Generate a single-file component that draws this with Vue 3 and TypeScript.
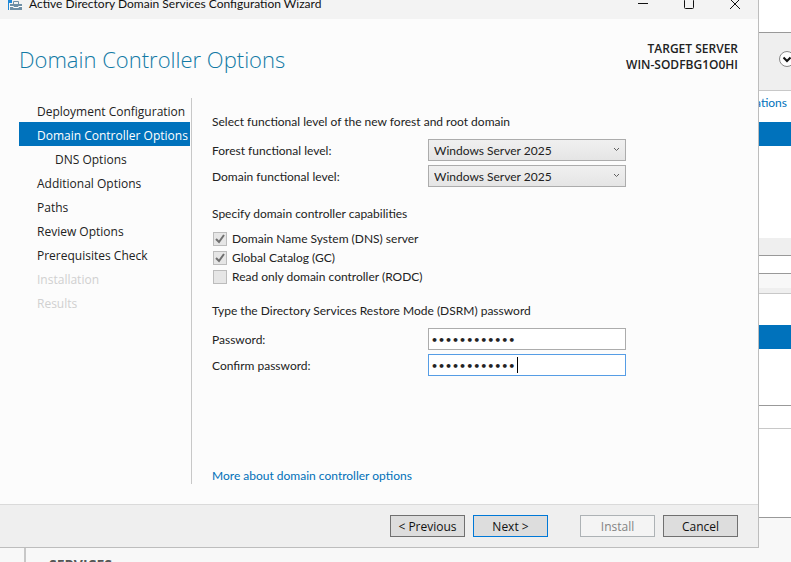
<script setup lang="ts">
import { onMounted, ref } from 'vue'

interface Step {
  label: string
  state?: 'current' | 'disabled'
  nested?: boolean
}

const steps: Step[] = [
  { label: 'Deployment Configuration' },
  { label: 'Domain Controller Options', state: 'current' },
  { label: 'DNS Options', nested: true },
  { label: 'Additional Options' },
  { label: 'Paths' },
  { label: 'Review Options' },
  { label: 'Prerequisites Check' },
  { label: 'Installation', state: 'disabled' },
  { label: 'Results', state: 'disabled' },
]

const levels = ['Windows Server 2025', 'Windows Server 2022', 'Windows Server 2016']
const forestLevel = ref(levels[0])
const domainLevel = ref(levels[0])

const capabilities = ref([
  { id: 'dns', label: 'Domain Name System (DNS) server', on: true },
  { id: 'gc', label: 'Global Catalog (GC)', on: true },
  { id: 'rodc', label: 'Read only domain controller (RODC)', on: false },
])

const password = ref('P@ssw0rd2025')
const confirmation = ref('P@ssw0rd2025')
const confirmInput = ref<HTMLInputElement | null>(null)

onMounted(() => {
  confirmInput.value?.focus()
})
</script>

<template>
  <div class="desktop">
    <section class="wizard">
      <header class="titlebar">
        <svg class="app-icon" width="16" height="16" viewBox="0 0 16 16" aria-hidden="true">
          <path d="M1 0h7v15H1z" fill="#1e88d8" />
          <path d="M2 8h3V5h8v3h3v8H2z" fill="#f3f3f3" />
          <path d="M3 9h12v6H3z" fill="#6f8fa6" />
          <path d="M6.500 9V6.500h5V9" fill="none" stroke="#6f8fa6" />
          <path d="M3 11.500h3.500v1h5v-1H15" fill="none" stroke="#fff" />
        </svg>
        <span class="caption">Active Directory Domain Services Configuration Wizard</span>
        <div class="window-buttons">
          <button type="button" aria-label="Minimize">
            <svg width="12" height="12" viewBox="0 0 12 12"><path d="M1 5.500h10" /></svg>
          </button>
          <button type="button" aria-label="Maximize">
            <svg width="12" height="12" viewBox="0 0 12 12"><rect x="1.500" y="1.500" width="9" height="9" rx="1" /></svg>
          </button>
          <button type="button" aria-label="Close">
            <svg width="12" height="12" viewBox="0 0 12 12"><path d="M1 1l10 10M11 1L1 11" /></svg>
          </button>
        </div>
      </header>

      <div class="heading">
        <h1>Domain Controller Options</h1>
        <p class="target">TARGET SERVER<br />WIN-SODFBG1O0HI</p>
      </div>

      <div class="body">
        <nav class="steps">
          <a
            v-for="step in steps"
            :key="step.label"
            href="#"
            :class="[step.state, { nested: step.nested }]"
            >{{ step.label }}</a
          >
        </nav>

        <form id="options" class="options" @submit.prevent>
          <p>Select functional level of the new forest and root domain</p>
          <div class="fields">
            <label for="forest">Forest functional level:</label>
            <div class="field">
              <select id="forest" v-model="forestLevel">
                <option v-for="level in levels" :key="level">{{ level }}</option>
              </select>
              <svg width="7" height="5" viewBox="0 0 7 5"><path d="M1 1l2.500 2.500L6 1" /></svg>
            </div>
            <label for="domain">Domain functional level:</label>
            <div class="field">
              <select id="domain" v-model="domainLevel">
                <option v-for="level in levels" :key="level">{{ level }}</option>
              </select>
              <svg width="7" height="5" viewBox="0 0 7 5"><path d="M1 1l2.500 2.500L6 1" /></svg>
            </div>
          </div>

          <p>Specify domain controller capabilities</p>
          <div class="checks">
            <label v-for="item in capabilities" :key="item.id">
              <span class="box">
                <input v-model="item.on" type="checkbox" disabled />
                <svg v-if="item.on" width="12" height="12" viewBox="0 0 12 12">
                  <path d="M2 6l3 3 5-7" />
                </svg>
              </span>
              {{ item.label }}
            </label>
          </div>

          <p>Type the Directory Services Restore Mode (DSRM) password</p>
          <div class="fields">
            <label for="password">Password:</label>
            <div class="field">
              <input id="password" v-model="password" type="password" />
            </div>
            <label for="confirm">Confirm password:</label>
            <div class="field">
              <input id="confirm" ref="confirmInput" v-model="confirmation" type="password" />
              <span class="caret"></span>
            </div>
          </div>

          <a class="more" href="#">More about domain controller options</a>
        </form>
      </div>

      <footer class="actions">
        <button type="button">&lt; Previous</button>
        <button type="submit" form="options" class="primary">Next &gt;</button>
        <button type="button" class="install" disabled>Install</button>
        <button type="button">Cancel</button>
      </footer>
    </section>

    <aside class="behind">
      <div class="band top"></div>
      <div class="band toolbar">
        <svg width="18" height="18" viewBox="0 0 18 18" aria-hidden="true">
          <circle cx="9" cy="9" r="7.500" fill="#fdfdfd" stroke="#888" />
          <path d="M5.500 7.500L9 11l3.500-3.500" fill="none" stroke="#111" stroke-width="2" />
        </svg>
      </div>
      <div class="band links">ations</div>
      <div class="band selected"></div>
      <div class="band list"></div>
      <div class="band scroll"></div>
      <div class="band gap"></div>
      <div class="band header"></div>
      <div class="band subheader"></div>
      <div class="band filter"></div>
      <div class="band selected"></div>
      <div class="band rows"></div>
      <div class="band divider"></div>
      <div class="band rest"></div>
    </aside>

    <div class="below"><div class="tile">SERVICES</div></div>
  </div>
</template>

<style>
body {
  background: #f8f8f8;
}
</style>

<style scoped>
* {
  box-sizing: border-box;
}

.desktop {
  display: grid;
  grid-template-columns: minmax(0, 1fr) 32px;
  grid-template-rows: auto minmax(0, 1fr);
  height: 100vh;
  overflow: hidden;
  background: #f8f8f8;
  color: #222;
  font: 12px/16px Lato, 'Open Sans', sans-serif;
}

p,
h1 {
  margin: 0;
}

a {
  color: #0070b8;
  text-decoration: none;
}

button,
input,
select {
  font: inherit;
  color: inherit;
}

.wizard {
  display: flex;
  flex-direction: column;
  border: solid #bdbdbd;
  border-width: 0 1px 1px 0;
  background: #fcfcfc;
}

.titlebar {
  display: flex;
  align-items: flex-start;
  height: 19px;
  padding-left: 7px;
  background: #f3f3f3;
  color: #111;
  overflow: hidden;
}

.app-icon {
  margin: -5px 6px 0 0;
}

.caption {
  margin-top: -4px;
}

.window-buttons {
  display: flex;
  margin: -4px 0 0 auto;
}

.window-buttons button {
  display: grid;
  place-items: center;
  width: 46px;
  height: 16px;
  padding: 0;
  border: 0;
  background: none;
}

.window-buttons svg {
  fill: none;
  stroke: #111;
}

.heading {
  display: flex;
  justify-content: space-between;
  align-items: flex-start;
  padding: 22px 20px 0 19px;
}

h1 {
  color: #127aa5;
  font-family: 'Open Sans', sans-serif;
  font-size: 22px;
  font-weight: 300;
  line-height: 36px;
}

.target {
  font-family: 'Open Sans', sans-serif;
  font-weight: 600;
  text-align: right;
}

.body {
  display: flex;
  gap: 20px;
  padding: 21px 20px 20px 19px;
}

.steps {
  display: flex;
  flex-direction: column;
  flex: none;
  width: 173px;
  padding-right: 1px;
  border-right: 1px solid #c8c8c8;
  font-family: 'Open Sans', sans-serif;
  line-height: 20px;
  white-space: nowrap;
}

.steps a {
  padding: 4px 0 0 18px;
  color: #222;
}

.steps .nested {
  padding-left: 36px;
}

.steps .current {
  background: #0072bc;
  color: #fff;
}

.steps .disabled {
  color: #d0d0d0;
}

.options {
  flex: 1;
  min-width: 0;
  padding-top: 16px;
}

.fields {
  display: grid;
  grid-template-columns: 216px 198px;
  align-items: center;
  gap: 4px 0;
  margin: 9px 0 19px;
}

.fields label {
  padding-top: 2px;
}

.field {
  position: relative;
}

.field input,
.field select {
  display: block;
  width: 100%;
  height: 22px;
  margin: 0;
  border: 1px solid #acacac;
  border-radius: 0;
  outline: 0;
}

.field input {
  padding: 3px 2px 0;
  background: #fff;
  font: bold 11px 'DejaVu Sans', sans-serif;
  caret-color: transparent;
}

.field input:focus {
  border-color: #569de5;
}

.caret {
  display: none;
  position: absolute;
  top: 3px;
  left: 89px;
  width: 1px;
  height: 16px;
  background: #000;
}

input:focus + .caret {
  display: block;
}

.field select {
  padding: 2px 5px 0;
  appearance: none;
  background: linear-gradient(#f0f0f0, #e5e5e5);
}

.field svg {
  position: absolute;
  top: 8px;
  right: 6px;
  fill: none;
  stroke: #606060;
  pointer-events: none;
}

.checks {
  display: flex;
  flex-direction: column;
  gap: 3px;
  margin: 9px 0 18px;
}

.checks label {
  display: flex;
  align-items: center;
  gap: 5px;
}

.box {
  display: grid;
  width: 15px;
  justify-items: end;
  align-items: center;
}

.box > * {
  grid-area: 1 / 1;
}

.box input {
  width: 14px;
  height: 14px;
  margin: 0;
  appearance: none;
  border: 1px solid #bcbcbc;
  background: #e6e6e6;
}

.box svg {
  margin-right: 1px;
  fill: none;
  stroke: #707070;
  stroke-width: 2;
}

.more {
  display: block;
  margin-top: 92px;
}

.actions {
  display: flex;
  justify-content: flex-end;
  gap: 8px;
  padding: 10px 20px;
  border-top: 1px solid #dadada;
  background: #efefef;
}

.actions button {
  width: 75px;
  height: 22px;
  padding: 2px 0 0;
  border: 1px solid #707070;
  background: #ddd;
  color: #111;
  font-family: 'Open Sans', sans-serif;
}

.actions .primary {
  border-color: #0078d7;
}

.actions .install {
  margin-left: 24px;
  border-color: #adb2b5;
  background: #f4f4f4;
  color: #838383;
}

.behind {
  display: flex;
  flex-direction: column;
  background: #fff;
  overflow: hidden;
}

.band {
  flex: none;
  border-bottom: 1px solid #999;
}

.top {
  height: 33px;
}

.toolbar {
  height: 58px;
  padding: 17px 0 0 19px;
  border-color: #c8c8c8;
  background: #efefef;
}

.links {
  display: flex;
  justify-content: flex-end;
  height: 31px;
  padding: 4px 4px 0 0;
  border: 0;
  color: #0072bc;
}

.selected {
  height: 24px;
  border: 0;
  background: #0072bc;
}

.list {
  height: 92px;
  border: 0;
}

.scroll {
  height: 18px;
  background: #efefef;
}

.gap {
  height: 18px;
}

.header {
  height: 14px;
  border: 0;
  background: #f8f8f8;
}

.subheader {
  height: 6px;
  border-color: #c8c8c8;
  background: #efefef;
}

.filter {
  height: 31px;
  border: 0;
}

.rows {
  height: 57px;
}

.divider {
  height: 23px;
  border-color: #c8c8c8;
}

.rest {
  height: 89px;
}

.behind::after {
  content: '';
  flex: 1;
  background: #f8f8f8;
}

.below {
  grid-column: 1 / -1;
  min-height: 0;
  padding-left: 24px;
  overflow: hidden;
}

.tile {
  padding: 9px 0 0 23px;
  border-left: 2px solid #c8c8c8;
  color: #555;
  font: 700 14px/16px 'Open Sans', sans-serif;
}
</style>
